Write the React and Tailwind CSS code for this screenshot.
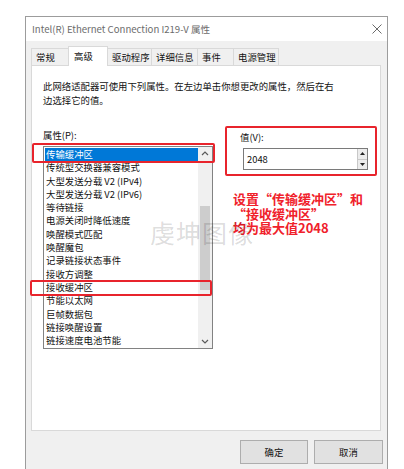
import React from 'react';

const items = [
  '传输缓冲区',
  '传统型交换器兼容模式',
  '大型发送分载 V2 (IPv4)',
  '大型发送分载 V2 (IPv6)',
  '等待链接',
  '电源关闭时降低速度',
  '唤醒模式匹配',
  '唤醒魔包',
  '记录链接状态事件',
  '接收方调整',
  '接收缓冲区',
  '节能以太网',
  '巨帧数据包',
  '链接唤醒设置',
  '链接速度电池节能',
];

const tabs = [
  { label: '常规', w: 'w-[38px]' },
  { label: '高级', w: 'w-[40px]', active: true },
  { label: '驱动程序', w: 'w-[45px]' },
  { label: '详细信息', w: 'w-[47px]' },
  { label: '事件', w: 'w-[37px]' },
  { label: '电源管理', w: 'w-[46px]' },
];

function Chevron({ up }) {
  return (
    <svg width="8" height="5" viewBox="0 0 8 5">
      <path
        d={up ? 'M1 4 L4 1 L7 4' : 'M1 1 L4 4 L7 1'}
        fill="none"
        stroke="#5a5a5a"
        strokeWidth="1.2"
      />
    </svg>
  );
}

export default function App() {
  return (
    <div className="w-[404px] h-[469px] bg-white relative overflow-hidden font-['Noto_Sans_CJK_SC','Liberation_Sans',sans-serif] text-[9.4px] text-[#111]">
      <div className="pt-[16px] pl-[25px]">
        <div className="w-[363px] h-[453px] border-l border-t border-r border-[#9c9c9c] flex flex-col">
          {/* Title bar */}
          <div className="h-[24px] bg-white flex items-center justify-between pl-[6px] pr-[5px] shrink-0">
            <span className="text-[9.6px] leading-[14px] text-[#6b6b6b]">
              Intel(R) Ethernet Connection I219-V 属性
            </span>
            <svg width="10" height="10" viewBox="0 0 10 10">
              <path d="M0.5 0.5 L9.5 9.5 M9.5 0.5 L0.5 9.5" stroke="#6a6a6a" strokeWidth="1" />
            </svg>
          </div>

          {/* Body */}
          <div className="flex-1 bg-[#f0f0f0] pl-[5px] flex flex-col">
            {/* Tabs */}
            <div className="h-[24px] flex items-end shrink-0">
              {tabs.map((t, i) =>
                t.active ? (
                  <div
                    key={t.label}
                    className={`${t.w} h-[20px] -mb-px -ml-px relative z-10 bg-white border-l border-t border-r border-[#d9d9d9] pl-[5px] pt-[2px] leading-[14px]`}
                  >
                    {t.label}
                  </div>
                ) : (
                  <div
                    key={t.label}
                    className={`${t.w} h-[17px] ${i === 0 ? '' : '-ml-px'} bg-[#f0f0f0] border-l border-t border-r border-[#d9d9d9] pl-[4px] flex items-center leading-[14px]`}
                  >
                    {t.label}
                  </div>
                )
              )}
            </div>

            {/* Panel */}
            <div className="w-[350px] h-[366px] shrink-0 border border-[#d9d9d9] bg-white pl-[11px] pt-[13px]">
              <p className="leading-[14px]">
                此网络适配器可使用下列属性。在左边单击你想更改的属性，然后在右
                <br />
                边选择它的值。
              </p>
              <div className="flex mt-[21px]">
                {/* Left column */}
                <div className="w-[170px]">
                  <div className="leading-[14px]">属性(P):</div>
                  <div className="mt-[4px] w-[170px] h-[203px] border border-[#828282] flex">
                    <div className="flex-1 py-[1px] pl-[1px]">
                      {items.map((it, i) => (
                        <div
                          key={it}
                          className={`h-[13.3px] leading-[13.3px] pl-[1px] whitespace-nowrap ${
                            i === 0 ? 'bg-[#0078d7] text-white' : ''
                          }`}
                        >
                          {it}
                        </div>
                      ))}
                    </div>
                    <div className="w-[14px] bg-[#f0f0f0] flex flex-col">
                      <div className="h-[13px] flex items-center justify-center">
                        <Chevron up />
                      </div>
                      <div className="flex-1 pt-[46px] px-[2px]">
                        <div className="h-[84px] bg-[#cdcdcd]" />
                      </div>
                      <div className="h-[13px] flex items-center justify-center">
                        <Chevron />
                      </div>
                    </div>
                  </div>
                </div>

                {/* Right column */}
                <div className="ml-[27px] pt-[2px]">
                  <div className="leading-[14px]">值(V):</div>
                  <div className="mt-[4px] ml-[3px] w-[125px] h-[22px] border border-[#7a7a7a] flex">
                    <div className="flex-1 pl-[3px] flex items-center">2048</div>
                    <div className="w-[10px] flex flex-col border-l border-[#c8c8c8]">
                      <div className="flex-1 bg-[#ececec] border-b border-[#c8c8c8] flex items-center justify-center">
                        <svg width="5" height="3" viewBox="0 0 5 3">
                          <path d="M0 3 L2.5 0 L5 3 Z" fill="#222" />
                        </svg>
                      </div>
                      <div className="flex-1 bg-[#ececec] flex items-center justify-center">
                        <svg width="5" height="3" viewBox="0 0 5 3">
                          <path d="M0 0 L2.5 3 L5 0 Z" fill="#222" />
                        </svg>
                      </div>
                    </div>
                  </div>
                  <div className="mt-[22px] -ml-[7px] text-[13px] leading-[14.5px] font-bold text-[#f0212b] whitespace-nowrap">
                    <div>设置“传输缓冲区”和</div>
                    <div>“接收缓冲区”</div>
                    <div>均为最大值2048</div>
                  </div>
                </div>
              </div>
            </div>

            {/* Buttons */}
            <div className="flex justify-end gap-[6px] mt-[9px] pr-[4px]">
              <div className="w-[68px] h-[24px] bg-[#e1e1e1] border border-[#adadad] flex items-center justify-center">
                确定
              </div>
              <div className="w-[69px] h-[24px] bg-[#e1e1e1] border border-[#adadad] flex items-center justify-center">
                取消
              </div>
            </div>
          </div>
        </div>
      </div>

      {/* Red annotation boxes */}
      <div className="absolute left-[32px] top-[143px] w-[183px] h-[20px] border-2 border-[#e8242c] rounded-[2px]" />
      <div className="absolute left-[30px] top-[280px] w-[182px] h-[16px] border-2 border-[#e8242c] rounded-[2px]" />
      <div className="absolute left-[225px] top-[126px] w-[152px] h-[50px] border-2 border-[#e8242c] rounded-[2px]" />

      {/* Watermark */}
      <div className="absolute left-[150px] top-[216px] text-[25px] leading-[32px] tracking-[1px] text-[#000]/15 whitespace-nowrap pointer-events-none">
        虔坤图像
      </div>
    </div>
  );
}
